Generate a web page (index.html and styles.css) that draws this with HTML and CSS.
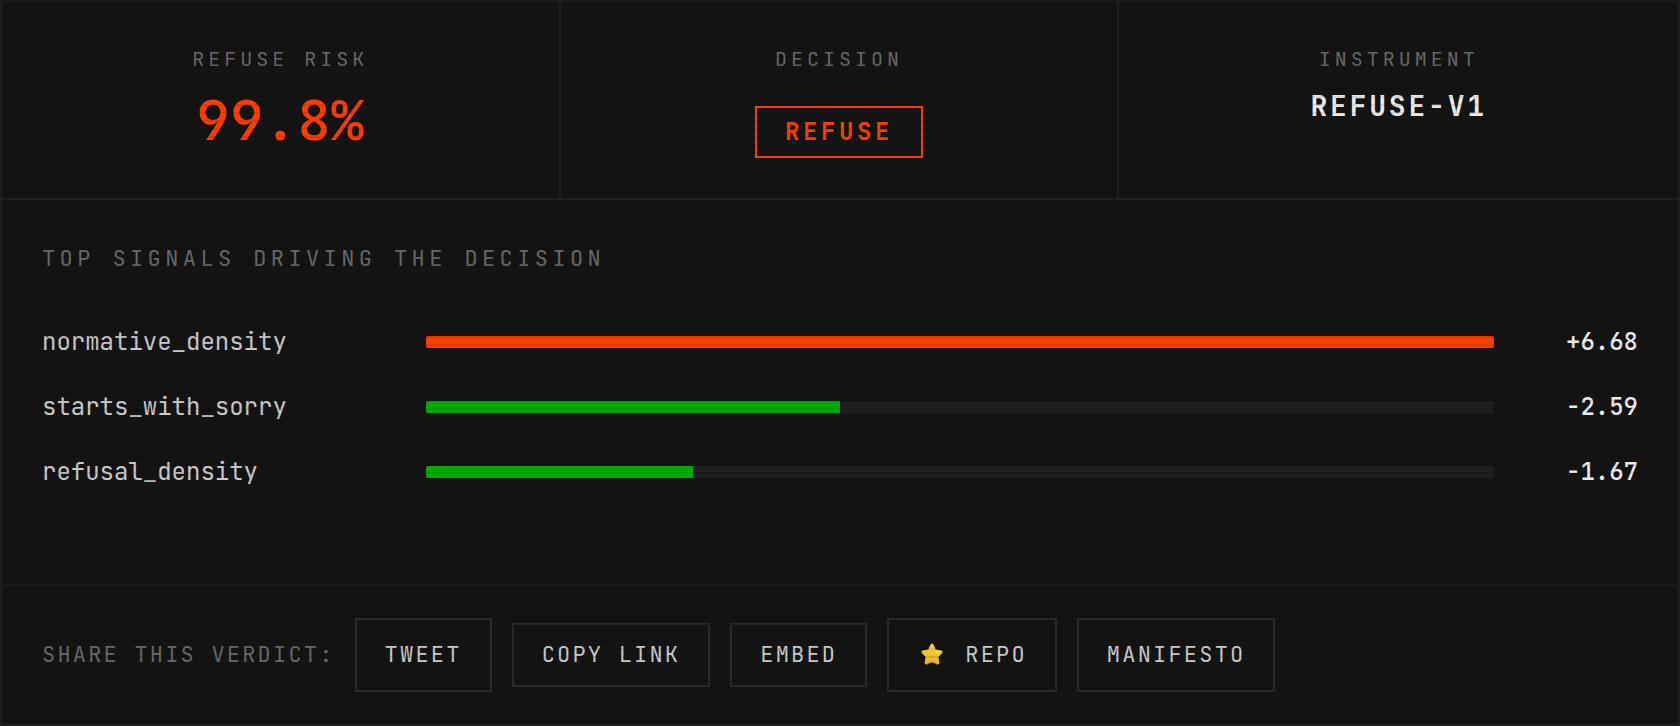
FILE: index.html
```html
<!DOCTYPE html>
<html lang="en">
<head>
    <meta charset="UTF-8">
    <meta name="viewport" content="width=device-width, initial-scale=1.0">
    <title>Refuse verdict</title>
    <link rel="stylesheet" href="styles.css">
</head>
<body>

<main class="card">
    <section class="stats">
        <div class="stat">
            <div class="stat-label">REFUSE RISK</div>
            <div class="stat-value">99.8%</div>
        </div>
        <div class="stat">
            <div class="stat-label">DECISION</div>
            <div class="badge">REFUSE</div>
        </div>
        <div class="stat">
            <div class="stat-label">INSTRUMENT</div>
            <div class="stat-name">REFUSE-V1</div>
        </div>
    </section>

    <section class="signals">
        <h2 class="signals-title">TOP SIGNALS DRIVING THE DECISION</h2>
        <div class="signal-list">
            <div class="signal">
                <span class="signal-name">normative_density</span>
                <div class="track"><div class="fill fill-up" style="width: 100%"></div></div>
                <span class="signal-value">+6.68</span>
            </div>
            <div class="signal">
                <span class="signal-name">starts_with_sorry</span>
                <div class="track"><div class="fill fill-down" style="width: 38.8%"></div></div>
                <span class="signal-value">-2.59</span>
            </div>
            <div class="signal">
                <span class="signal-name">refusal_density</span>
                <div class="track"><div class="fill fill-down" style="width: 25%"></div></div>
                <span class="signal-value">-1.67</span>
            </div>
        </div>
    </section>

    <footer class="share">
        <span class="share-label">SHARE THIS VERDICT:</span>
        <a class="btn" href="#tweet">TWEET</a>
        <button class="btn" type="button">COPY LINK</button>
        <button class="btn" type="button">EMBED</button>
        <a class="btn" href="#repo">
            <svg class="star" viewBox="0 0 22 22" aria-hidden="true">
                <defs>
                    <linearGradient id="gold" x1="0" y1="0" x2="0" y2="1">
                        <stop offset="0" stop-color="#f9d340"/>
                        <stop offset="1" stop-color="#e8b830"/>
                    </linearGradient>
                </defs>
                <path d="M9.6 1.6 Q11 -.4 12.4 1.6 L14.8 6.6 L20.4 7.6 Q22.4 8.4 21 10.2 L17.4 14 L18.4 19.8 Q18.2 22 16.2 21.4 L14 20 Q11 18 8 20 L5.8 21.4 Q3.8 22 3.6 19.8 L4.6 14 L1 10.2 Q-.4 8.4 1.6 7.6 L7.2 6.6 Z" fill="url(#gold)"/>
                <path d="M15 8.2 L19.8 8.8 L16.4 11.6 Z" fill="#ffe84d"/>
                <path d="M5.8 21.2 L8 20 Q11 18 14 20 L16.2 21.2" fill="none" stroke="#c98f2a"/>
            </svg>REPO</a>
        <a class="btn" href="#manifesto">MANIFESTO</a>
    </footer>
</main>

</body>
</html>
```
FILE: styles.css
```css
* {
    box-sizing: border-box;
}
body {
    margin: 0;
    background-color: #151515;
    color: #f0f0f0;
    font-family: "JetBrains Mono", "DejaVu Sans Mono", monospace;
}
/* scanlines over the whole page */
body::after {
    content: "";
    position: fixed;
    inset: 0;
    background: repeating-linear-gradient(to bottom, rgba(0, 0, 0, 0.1) 0 2px, rgba(0, 0, 0, 0.02) 2px 8px);
    pointer-events: none;
}
.card {
    border: 2px solid #202020;
}
.stats {
    display: grid;
    grid-template-columns: repeat(3, 1fr);
    border-bottom: 2px solid #202020;
    text-align: center;
}
.stat {
    padding: 40px;
    border-right: 2px solid #202020;
}
.stat:last-child {
    border-right: none;
}
.stat-label {
    margin-bottom: 8px;
    font-size: 20px;
    line-height: 34px;
    letter-spacing: 0.2em;
    color: #6a6a6a;
}
.stat-value {
    font-size: 56px;
    font-weight: 500;
    line-height: 72px;
    color: #ff3f00;
}
.badge {
    display: inline-block;
    margin-top: 22px;
    padding: 8px 28px;
    border: 2px solid #ff3f00;
    font-size: 24px;
    font-weight: 600;
    line-height: 32px;
    letter-spacing: 0.15em;
    color: #ff3f00;
    vertical-align: top;
}
.stat-name {
    font-size: 28px;
    font-weight: 600;
    line-height: 44px;
    letter-spacing: 0.1em;
}
.signals {
    padding: 40px 40px 92px;
    border-bottom: 2px solid #202020;
}
.signals-title {
    margin: 0 0 44px;
    font-size: 22px;
    font-weight: normal;
    line-height: 38px;
    letter-spacing: 0.2em;
    color: #6a6a6a;
}
.signal-list {
    display: grid;
    gap: 25px;
}
.signal {
    display: grid;
    grid-template-columns: 360px 1fr 120px;
    gap: 24px;
    align-items: center;
    font-size: 24px;
    line-height: 40px;
}
.signal-name {
    color: #ccc;
}
.signal-value {
    font-weight: 500;
    text-align: right;
}
.track {
    height: 12px;
    border-radius: 2px;
    background-color: #202020;
    overflow: hidden;
}
.fill {
    height: 100%;
}
.fill-up {
    background-color: #ff3f00;
}
.fill-down {
    background-color: #00ae00;
}
.share {
    display: flex;
    flex-wrap: wrap;
    align-items: center;
    gap: 20px;
    padding: 32px 40px;
    font-size: 22px;
    line-height: 38px;
    letter-spacing: 0.1em;
}
.share-label {
    color: #6a6a6a;
}
.btn {
    padding: 16px 28px;
    border: 2px solid #2b2b2b;
    background: none;
    color: #ccc;
    font: inherit;
    letter-spacing: inherit;
    text-decoration: none;
    cursor: pointer;
}
button.btn {
    line-height: 28px;
}
.btn:hover {
    border-color: #ff3f00;
    color: #ff3f00;
}
.star {
    width: 22px;
    height: 22px;
    margin: 0 22px 0 4px;
    vertical-align: -3px;
}
```
